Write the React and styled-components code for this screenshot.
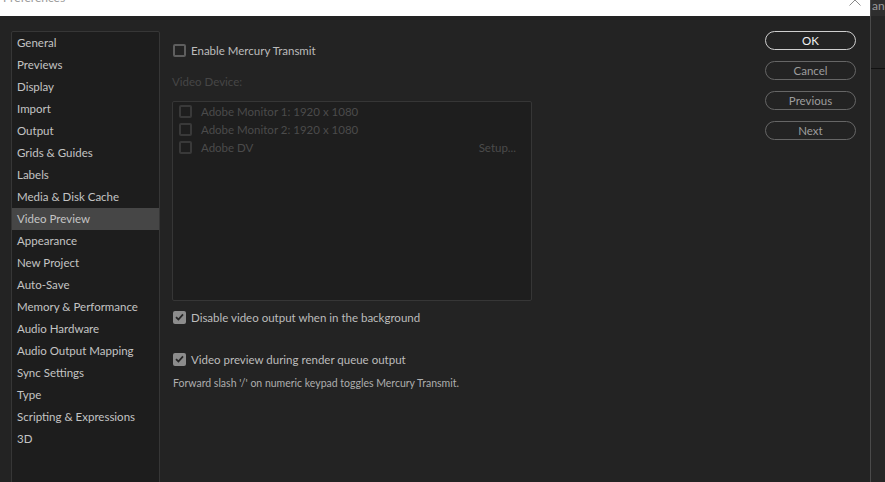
import React from "react";
import styled, { createGlobalStyle } from "styled-components";

const Global = createGlobalStyle`
  html, body { margin: 0; padding: 0; background: #262626; overflow: hidden; }
  body { font-family: Lato, "Open Sans", sans-serif; }
  #root { width: 885px; height: 482px; }
`;

const Page = styled.div`
  display: flex;
  width: 885px;
  height: 482px;
  overflow: hidden;
`;

const Window = styled.div`
  width: 870px;
  flex-shrink: 0;
  display: flex;
  flex-direction: column;
  border-right: 1px solid #4a4a4a;
`;

const TitleBar = styled.div`
  height: 16px;
  background: #ffffff;
  position: relative;
  overflow: hidden;
  display: flex;
  align-items: flex-start;
  justify-content: space-between;
`;

const TitleText = styled.div`
  font-size: 12px;
  line-height: 14px;
  color: #9a9a9a;
  margin-top: -9px;
  margin-left: 3px;
`;

const CloseIcon = styled.svg`
  margin-top: -6px;
  margin-right: 9px;
`;

const Strip = styled.div`
  flex: 1;
  min-width: 0;
  overflow: hidden;
  background: #262626;
  display: flex;
  flex-direction: column;
`;

const StripTop = styled.div`
  height: 16px;
  background: #2e2e2e;
  overflow: hidden;
  font-size: 12px;
  line-height: 12px;
  color: #9a9a9a;
  white-space: nowrap;
  padding-left: 1px;
`;

const StripLine = styled.div`
  margin-top: 52px;
  height: 1px;
  background: #111;
`;

const Body = styled.div`
  flex: 1;
  background: #232323;
  display: flex;
  padding: 15px 14px 0 11px;
  overflow: hidden;
`;

const Sidebar = styled.div`
  width: 147px;
  height: 480px;
  flex-shrink: 0;
  background: #1d1d1d;
  border: 1px solid #363636;
  border-radius: 2px;
  display: flex;
  flex-direction: column;
`;

const NavItem = styled.div`
  height: 22px;
  line-height: 22px;
  padding-left: 5px;
  font-size: 11.5px;
  color: #c4c4c4;
  background: ${(p) => (p.$active ? "#464646" : "transparent")};
  white-space: nowrap;
`;

const Main = styled.div`
  flex: 1;
  padding: 11px 0 0 12px;
  display: flex;
  flex-direction: column;
`;

const CheckRow = styled.label`
  display: flex;
  align-items: center;
  gap: 5px;
  height: 16px;
  font-size: 11.5px;
  color: ${(p) => (p.$dim ? "#4b4b4b" : "#bcbcbc")};
  margin-top: ${(p) => p.$mt || 0}px;
  padding-left: 1px;
`;

const Box = styled.span`
  width: 9px;
  height: 9px;
  border: 2px solid ${(p) => (p.$dim ? "#393939" : "#5e5e5e")};
  border-radius: 2px;
  display: inline-flex;
  align-items: center;
  justify-content: center;
  flex-shrink: 0;
`;

const CheckedBox = styled.span`
  width: 13px;
  height: 13px;
  background: #8c8c8c;
  border-radius: 2px;
  display: inline-flex;
  align-items: center;
  justify-content: center;
  flex-shrink: 0;
`;

const SectionLabel = styled.div`
  font-size: 11.5px;
  color: #464646;
  margin-top: 16px;
  line-height: 16px;
`;

const DeviceList = styled.div`
  margin-top: 11px;
  width: 360px;
  height: 200px;
  box-sizing: border-box;
  background: #1e1e1e;
  border: 1px solid #363636;
  border-radius: 2px;
  padding: 0 0 0 6px;
  display: flex;
  flex-direction: column;
`;

const DeviceRow = styled.div`
  display: flex;
  align-items: center;
  height: 18px;
  font-size: 11.5px;
  color: #4b4b4b;
  gap: 9px;
  padding-right: 15px;
`;

const DeviceName = styled.span`
  flex: 1;
`;

const Note = styled.div`
  font-size: 10.5px;
  color: #aeaeae;
  margin-top: 9px;
  line-height: 14px;
  padding-left: 1px;
`;

const Buttons = styled.div`
  width: 91px;
  flex-shrink: 0;
  display: flex;
  flex-direction: column;
  gap: 11px;
`;

const Button = styled.button`
  height: 19px;
  border-radius: 10px;
  background: transparent;
  border: 1px solid ${(p) => (p.$primary ? "#cfcfcf" : "#666")};
  color: ${(p) => (p.$primary ? "#f2f2f2" : "#9d9d9d")};
  font-family: Lato, "Open Sans", sans-serif;
  font-size: 11.5px;
  padding: 0;
  line-height: 17px;
`;

const Check = () => (
  <svg width="9" height="8" viewBox="0 0 9 8">
    <path d="M1 4.2 L3.4 6.5 L8 1.3" fill="none" stroke="#262626" strokeWidth="1.8" />
  </svg>
);

const nav = [
  "General",
  "Previews",
  "Display",
  "Import",
  "Output",
  "Grids & Guides",
  "Labels",
  "Media & Disk Cache",
  "Video Preview",
  "Appearance",
  "New Project",
  "Auto-Save",
  "Memory & Performance",
  "Audio Hardware",
  "Audio Output Mapping",
  "Sync Settings",
  "Type",
  "Scripting & Expressions",
  "3D",
];

const devices = [
  { name: "Adobe Monitor 1: 1920 x 1080" },
  { name: "Adobe Monitor 2: 1920 x 1080" },
  { name: "Adobe DV", setup: true },
];

export default function App() {
  return (
    <>
      <Global />
      <Page>
        <Window>
          <TitleBar>
            <TitleText>Preferences</TitleText>
            <CloseIcon width="12" height="12" viewBox="0 0 12 12">
              <path d="M0.5 0.5 L11.5 11.5 M11.5 0.5 L0.5 11.5" stroke="#8a8a8a" strokeWidth="1" />
            </CloseIcon>
          </TitleBar>
          <Body>
            <Sidebar>
              {nav.map((n) => (
                <NavItem key={n} $active={n === "Video Preview"}>
                  {n}
                </NavItem>
              ))}
            </Sidebar>
            <Main>
              <CheckRow>
                <Box />
                Enable Mercury Transmit
              </CheckRow>
              <SectionLabel>Video Device:</SectionLabel>
              <DeviceList>
                {devices.map((d) => (
                  <DeviceRow key={d.name}>
                    <Box $dim />
                    <DeviceName>{d.name}</DeviceName>
                    {d.setup && <span>Setup...</span>}
                  </DeviceRow>
                ))}
              </DeviceList>
              <CheckRow $mt={8}>
                <CheckedBox>
                  <Check />
                </CheckedBox>
                Disable video output when in the background
              </CheckRow>
              <CheckRow $mt={26}>
                <CheckedBox>
                  <Check />
                </CheckedBox>
                Video preview during render queue output
              </CheckRow>
              <Note>Forward slash '/' on numeric keypad toggles Mercury Transmit.</Note>
            </Main>
            <Buttons>
              <Button $primary>OK</Button>
              <Button>Cancel</Button>
              <Button>Previous</Button>
              <Button>Next</Button>
            </Buttons>
          </Body>
        </Window>
        <Strip>
          <StripTop>anc</StripTop>
          <StripLine />
        </Strip>
      </Page>
    </>
  );
}
